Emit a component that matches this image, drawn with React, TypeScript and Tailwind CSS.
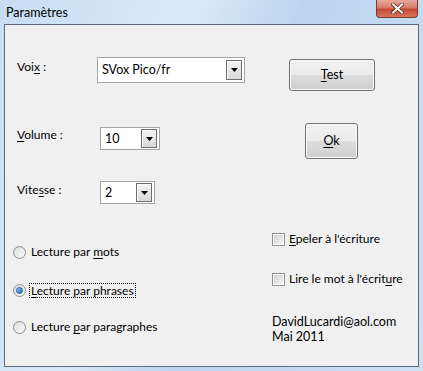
import React from "react";

const font = { fontFamily: 'Lato, "Open Sans", Arial, sans-serif' };

function Mn({ children }: { children: React.ReactNode }) {
  return <span className="underline underline-offset-2 decoration-1">{children}</span>;
}

function DropBtn({ h }: { h: string }) {
  return (
    <div className={`w-[16px] ${h} border border-[#6e6e6e] bg-gradient-to-b from-[#f4f4f4] to-[#d8d8d8] flex items-center justify-center shadow-[inset_1px_1px_0_#ffffff]`}>
      <svg width="7" height="4" viewBox="0 0 7 4"><path d="M0 0h7L3.5 4z" fill="#000" /></svg>
    </div>
  );
}

function Combo({ w, h, value, bh }: { w: string; h: string; value: string; bh: string }) {
  return (
    <div className={`${w} ${h} bg-white border border-[#a5a5a5] flex items-center justify-between pl-[4px] pr-[2px]`}>
      <span className="text-[12.5px] text-black">{value}</span>
      <DropBtn h={bh} />
    </div>
  );
}

function Radio({ checked }: { checked?: boolean }) {
  return (
    <div className="w-[13px] h-[13px] rounded-full border border-[#8f8f8f] bg-gradient-to-br from-[#d8d8d8] to-[#fbfbfb] flex items-center justify-center">
      {checked ? (
        <div className="w-[7px] h-[7px] rounded-full bg-gradient-to-br from-[#8fd3ff] to-[#1a5fb4] border border-[#2a5e90]" />
      ) : (
        <div className="w-[9px] h-[9px] rounded-full bg-gradient-to-br from-[#e0e0e0] to-[#f8f8f8]" />
      )}
    </div>
  );
}

function Check() {
  return (
    <div className="w-[13px] h-[13px] border border-[#8f8f8f] bg-white flex items-center justify-center">
      <div className="w-[9px] h-[9px] bg-gradient-to-br from-[#cfcfcf] to-[#f6f6f6]" />
    </div>
  );
}

function WinButton({ w, h, children }: { w: string; h: string; children: React.ReactNode }) {
  return (
    <div className={`${w} ${h} rounded-[3px] border border-[#707070] flex items-center justify-center text-[12.5px] text-black bg-[linear-gradient(#f2f2f2_0%,#ebebeb_50%,#dddddd_50%,#cfcfcf_100%)] shadow-[inset_0_0_0_1px_#fcfcfc]`}>
      {children}
    </div>
  );
}

export default function App() {
  return (
    <div className="w-[423px] h-[371px] overflow-hidden text-[12px] leading-[16px] text-black" style={font}>
      <div className="w-[423px] h-[371px] flex flex-col bg-[linear-gradient(110deg,#c7ddf4_0%,#d9e9f8_35%,#bcd5ef_55%,#cde1f5_100%)] px-[4px] pb-[4px]">
        <div className="h-[24px] flex items-start justify-between">
          <span className="pl-[2px] pt-[5px] text-[12.5px] leading-[16px] text-black">Paramètres</span>
          <div className="w-[42px] h-[18px] mr-[1px] rounded-b-[4px] border border-[#7a3a30] border-t-0 bg-[linear-gradient(#e9a99c_0%,#d77a68_45%,#c4482f_55%,#d8765c_100%)] flex items-center justify-center">
            <svg width="13" height="11" viewBox="0 0 13 11">
              <path d="M2 1.5 L11 9.5 M11 1.5 L2 9.5" stroke="#5a2a22" strokeWidth="3.6" strokeLinecap="square" />
              <path d="M2 1.5 L11 9.5 M11 1.5 L2 9.5" stroke="#ffffff" strokeWidth="2" strokeLinecap="square" />
            </svg>
          </div>
        </div>
        <div className="flex-1 bg-[#f0f0f0] border border-[#5f6a76] flex">
          {/* left column */}
          <div className="w-[267px] flex flex-col pl-[12px]">
            <div className="mt-[32px] flex items-center h-[26px]">
              <span className="w-[80px] -mt-[6px]">Voi<Mn>x</Mn> :</span>
              <Combo w="w-[148px]" h="h-[26px]" value="SVox Pico/fr" bh="h-[20px]" />
            </div>
            <div className="mt-[44px] flex items-center h-[23px]">
              <span className="w-[83px] -mt-[8px]"><Mn>V</Mn>olume :</span>
              <Combo w="w-[60px]" h="h-[23px]" value="10" bh="h-[19px]" />
            </div>
            <div className="mt-[31px] flex items-center h-[23px]">
              <span className="w-[83px] -mt-[6px]">Vite<Mn>s</Mn>se :</span>
              <Combo w="w-[55px]" h="h-[23px]" value="2" bh="h-[19px]" />
            </div>
            <div className="mt-[40px] flex flex-col gap-[22px] -ml-[4px]">
              <div className="flex items-center h-[16px] gap-[5px]">
                <Radio />
                <span>Lecture par <Mn>m</Mn>ots</span>
              </div>
              <div className="flex items-center h-[16px] gap-[3px]">
                <Radio checked />
                <span className="border border-dotted border-black px-[1px] leading-[13px]"><Mn>L</Mn>ecture par phrases</span>
              </div>
              <div className="flex items-center h-[16px] gap-[5px] -mt-[1px]">
                <Radio />
                <span>Lecture <Mn>p</Mn>ar paragraphes</span>
              </div>
            </div>
          </div>
          {/* right column */}
          <div className="flex-1 flex flex-col">
            <div className="mt-[34px] ml-[17px]">
              <WinButton w="w-[86px]" h="h-[32px]"><span><Mn>T</Mn>est</span></WinButton>
            </div>
            <div className="mt-[32px] ml-[33px]">
              <WinButton w="w-[53px]" h="h-[36px]"><span><Mn>O</Mn>k</span></WinButton>
            </div>
            <div className="mt-[72px] flex items-center h-[16px] gap-[4px]">
              <Check />
              <span><Mn>E</Mn>peler à l'écriture</span>
            </div>
            <div className="mt-[24px] flex items-center h-[16px] gap-[4px]">
              <Check />
              <span>Lire le mot à l'écrit<Mn>u</Mn>re</span>
            </div>
            <div className="mt-[27px] flex flex-col gap-0 text-[12.5px]">
              <div className="h-[15px] leading-[15px]">DavidLucardi@aol.com</div>
              <div className="h-[15px] leading-[15px]">Mai 2011</div>
            </div>
          </div>
        </div>
      </div>
    </div>
  );
}
